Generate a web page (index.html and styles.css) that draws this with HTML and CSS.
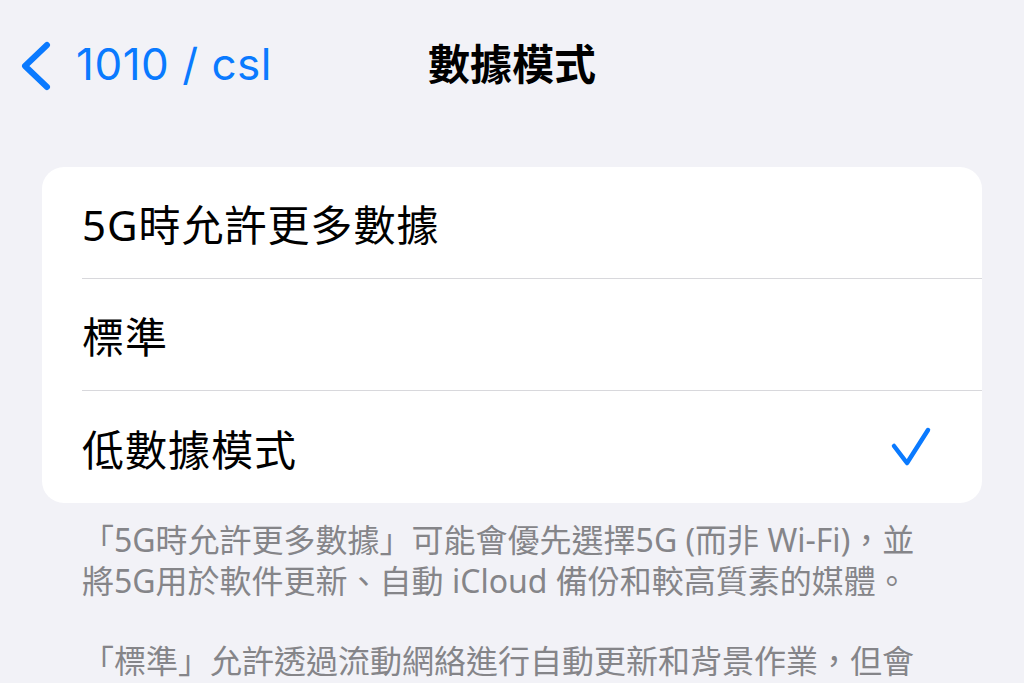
FILE: index.html
```html
<!DOCTYPE html>
<html lang="zh-Hant">
<head>
    <meta charset="UTF-8">
    <meta name="viewport" content="width=device-width, initial-scale=1.0">
    <title>數據模式</title>
    <link rel="stylesheet" href="styles.css">
</head>
<body>
    <header class="nav">
        <a class="back" href="#">
            <svg class="chevron" width="34" height="50" viewBox="0 0 34 50">
                <polyline points="27,4 5,25 27,46" fill="none" stroke="#0a7aff" stroke-width="6" stroke-linecap="round" stroke-linejoin="round"/>
            </svg>
            <span>1010 / csl</span>
        </a>
        <h1 class="title">數據模式</h1>
    </header>

    <ul class="card">
        <li class="row"><div class="row-inner">5G時允許更多數據</div></li>
        <li class="row"><div class="row-inner">標準</div></li>
        <li class="row">
            <div class="row-inner">
                低數據模式
                <svg class="check" width="42" height="42" viewBox="0 0 42 42">
                    <polyline points="4,20 17,37 38,4" fill="none" stroke="#0a7aff" stroke-width="4.5" stroke-linecap="round" stroke-linejoin="round"/>
                </svg>
            </div>
        </li>
    </ul>

    <div class="notes">
        <p>「5G時允許更多數據」可能會優先選擇5G (而非 Wi-Fi)，並將5G用於軟件更新、自動 iCloud 備份和較高質素的媒體。</p>
        <p>「標準」允許透過流動網絡進行自動更新和背景作業，但會</p>
    </div>
</body>
</html>
```

FILE: styles.css
```css
body { margin: 0; background: #f2f2f7; font-family: "Inter", "Noto Sans CJK TC", sans-serif; color: #000; overflow: hidden; }
.nav { position: relative; height: 132px; display: flex; align-items: center; justify-content: center; }
.back { position: absolute; left: 20px; top: 40px; display: flex; align-items: center; gap: 22px; color: #0a7aff; text-decoration: none; font-size: 44px; letter-spacing: 0.5px; }
.back span { margin-top: -3px; }
.title { margin: -10px 0 0; font-size: 42px; font-weight: 700; font-family: "Noto Sans CJK TC", sans-serif; }
.card { list-style: none; margin: 35px 42px 0; padding: 0; background: #fff; border-radius: 22px; overflow: hidden; }
.row { padding-left: 40px; height: 112px; }
.row-inner { height: 111px; display: flex; align-items: center; justify-content: space-between; padding-right: 50px; border-bottom: 1px solid #d8d8dc; font-size: 42px; letter-spacing: 1px; font-family: "Noto Sans", "Noto Sans CJK TC", sans-serif; }
.row:last-child .row-inner { border-bottom: none; height: 112px; }
.check { margin-top: 0; }
.notes { padding: 0 82px; margin-top: 16px; color: #858589; font-size: 32px; line-height: 41px; font-family: "Noto Sans", "Noto Sans CJK TC", sans-serif; }
.notes p { margin: 0 0 39px; }
```
